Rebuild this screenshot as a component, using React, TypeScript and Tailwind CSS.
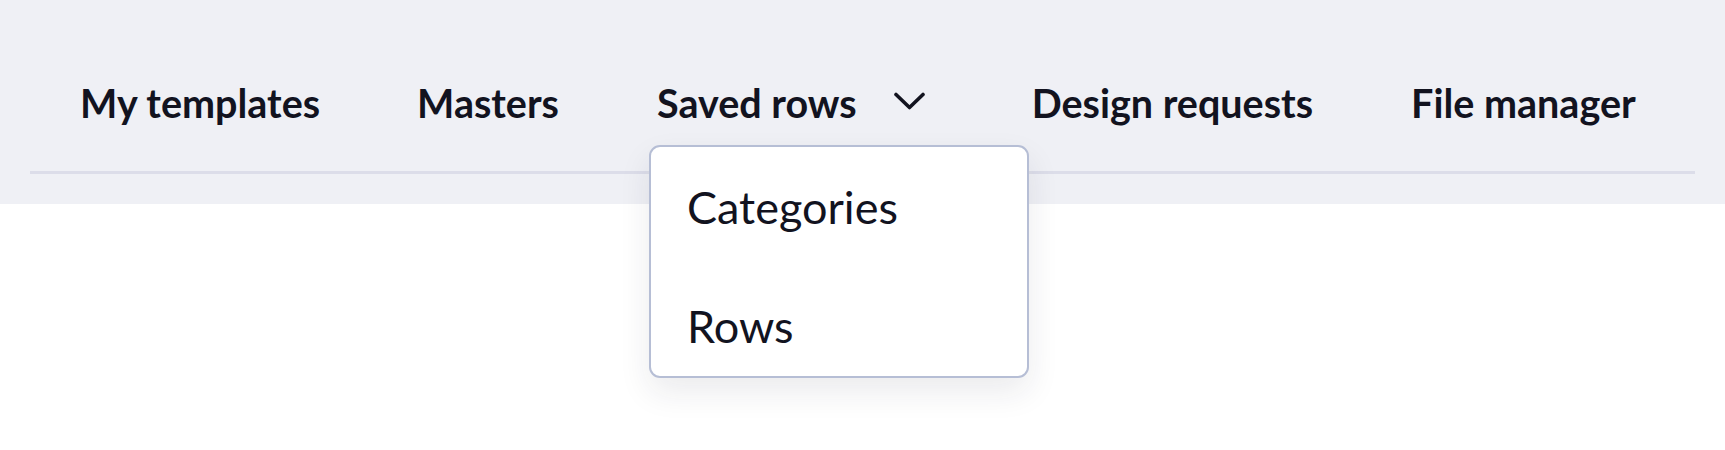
import { useState } from "react";

const navItems = ["My templates", "Masters", "Saved rows", "Design requests", "File manager"];

const ChevronDown = () => (
  <svg width="31" height="18" viewBox="0 0 31 18" fill="none" className="block">
    <path d="M2 2.5L15.5 15.5L29 2.5" stroke="#12131f" strokeWidth="3.6" strokeLinecap="round" strokeLinejoin="round" />
  </svg>
);

export default function App() {
  const [open] = useState(true);

  return (
    <div className="min-h-[450px] bg-white font-['Lato','Noto_Sans',sans-serif] text-[#12131f]">
      <header className="h-[204px] bg-[#eff0f5] px-[30px] pt-[79px]">
        <ul className="flex border-b-[3px] border-[#dcdde9]">
          {navItems.map((label, index) => (
            <li
              key={label}
              className={`relative flex h-[92px] items-start ${index === 0 ? "pl-[50px] pr-[48px]" : "px-[49px]"}`}
            >
              <span className="text-[39.5px] font-bold leading-[48px]">{label}</span>
              {label === "Saved rows" ? (
                <>
                  <span className="ml-[37px] mr-[9px] mt-[13px] w-[31px]">
                    <ChevronDown />
                  </span>
                  {open ? (
                    <div className="absolute left-[41px] top-[66px] z-10 h-[233px] w-[380px] rounded-[11px] border-[2.5px] border-[#b6bed5] bg-white shadow-[0_14px_32px_rgba(30,35,60,0.09)]">
                      <a className="block px-[36px] pt-[34px] pb-[32px] text-[45px] leading-[52px]" href="#">
                        Categories
                      </a>
                      <a className="block px-[36px] pt-[35px] text-[45px] leading-[52px]" href="#">
                        Rows
                      </a>
                    </div>
                  ) : null}
                </>
              ) : null}
            </li>
          ))}
        </ul>
      </header>
    </div>
  );
}
